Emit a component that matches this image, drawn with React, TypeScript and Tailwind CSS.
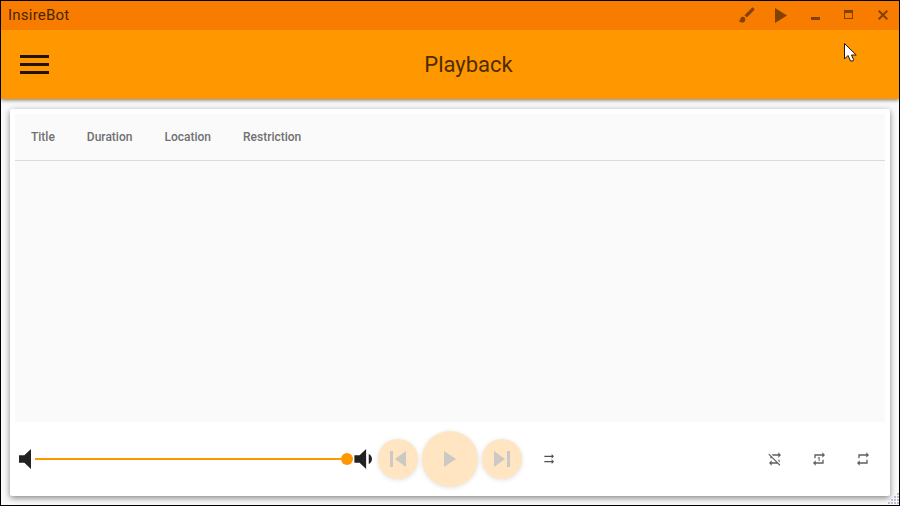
import React from "react";

function Glyph({ d, className, viewBox = "0 0 24 24" }: { d: string; className: string; viewBox?: string }) {
  return (
    <svg viewBox={viewBox} preserveAspectRatio="none" fill="currentColor" className={`block shrink-0 ${className}`}>
      <path d={d} />
    </svg>
  );
}

const BRUSH =
  "M20.71,4.63L19.37,3.29C19,2.9 18.35,2.9 17.96,3.29L9,12.25L11.75,15L20.71,6.04C21.1,5.65 21.1,5 20.71,4.63M7,14A3,3 0 0,0 4,17C4,18.31 2.84,19 2,19C2.92,20.22 4.5,21 6,21A4,4 0 0,0 10,17A3,3 0 0,0 7,14Z";
const REPEAT = "M17,17H7V14L3,18L7,22V19H19V13H17M7,7H17V10L21,6L17,2V5H5V11H7V7Z";
const REPEAT_ONCE = "M13,15V9H12L10,10V11H11.5V15M17,17H7V14L3,18L7,22V19H19V13H17M7,7H17V10L21,6L17,2V5H5V11H7V7Z";
const REPEAT_OFF =
  "M2,5.27L3.28,4L20,20.72L18.73,22L15.73,19H7V22L3,18L7,14V17H13.73L7,10.27V11H5V8.27L2,5.27M17,13H19V17.18L17,15.18V13M17,5V2L21,6L17,10V7H8.82L6.82,5H17Z";
const SHUFFLE_OFF = "M16,4.5V7H5V9H16V11.5L19.5,8M16,12.5V15H5V17H16V19.5L19.5,16";

function TitleBar() {
  return (
    <header className="z-20 flex h-[29px] items-center bg-[#f77c00] pr-[11px] pb-px pl-[7px] text-[#824100]">
      <h1 className="flex-1 text-[15px] leading-7 tracking-[0.22px] text-[#4a2500]">InsireBot</h1>
      <button className="mr-[18px]"><Glyph d={BRUSH} className="h-5 w-5" /></button>
      <button className="mr-[24px]"><Glyph d="M0 0L12.4 7.5L0 15Z" viewBox="0 0 12.4 15" className="h-[15px] w-[12px]" /></button>
      <button className="mt-[7px] mr-[24px] h-[3px] w-[9px] bg-[#7f4000]" aria-label="Minimize" />
      <button className="mr-[25px] mb-px h-[9px] w-[9px] border border-t-[3px] border-[#7f4000]" aria-label="Maximize" />
      <svg className="block h-[10px] w-[10px]" viewBox="0 0 10 10" fill="none" stroke="currentColor" strokeWidth="2">
        <path d="M.7 .7L9.3 9.3M9.3 .7L.7 9.3" />
      </svg>
    </header>
  );
}

function AppBar() {
  return (
    <div className="z-10 flex h-[69px] items-center bg-[#ff9800] shadow-[0_1px_4px_rgba(0,0,0,0.55)]">
      <button className="ml-[19px] flex w-[29px] flex-col gap-[5px] text-[#211300]" aria-label="Menu">
        <span className="h-[3px] w-full bg-current" />
        <span className="h-[3px] w-full bg-current" />
        <span className="h-[3px] w-full bg-current" />
      </button>
      <h2 className="flex-1 pr-[11px] text-center text-[22px] text-[#4c2d00]">Playback</h2>
    </div>
  );
}

function Controls() {
  return (
    <div className="flex h-[74px] items-center pl-[9px]">
      <Glyph d="M7,9V15H11L16,20V4L11,9H7Z" viewBox="7 4 9 16" className="h-5 w-3 text-[#222]" />
      <div className="ml-1 flex w-[318px] items-center">
        <div className="h-[2px] flex-1 bg-[#ff9800]" />
        <div className="h-3 w-3 rounded-full bg-[#ff9800]" />
      </div>
      <Glyph
        d="M5,9V15H9L14,20V4L9,9M18.5,12C18.5,10.23 17.5,8.71 16,7.97V16C17.5,15.29 18.5,13.76 18.5,12Z"
        viewBox="4.7 4 13.8 16"
        className="ml-[1px] h-5 w-[18px] text-[#222]"
      />
      <div className="ml-[6px] flex items-center gap-1 text-[#ccc8c3]">
        <button className="flex h-10 w-10 items-center justify-center rounded-full bg-[#ffe5c2] shadow-[0_1px_5px_rgba(0,0,0,0.12)]">
          <Glyph d="M0 0H3V16H0ZM16 0V16L5 8Z" viewBox="0 0 16 16" className="h-4 w-4" />
        </button>
        <button className="flex h-14 w-14 items-center justify-center rounded-full bg-[#ffe5c2] shadow-[0_1px_5px_rgba(0,0,0,0.12)]">
          <Glyph d="M0 0L12 8L0 16Z" viewBox="0 0 12 16" className="h-4 w-[12px]" />
        </button>
        <button className="flex h-10 w-10 items-center justify-center rounded-full bg-[#ffe5c2] shadow-[0_1px_5px_rgba(0,0,0,0.12)]">
          <Glyph d="M0 0L11 8L0 16ZM13 0H16V16H13Z" viewBox="0 0 16 16" className="h-4 w-4" />
        </button>
      </div>
      <button className="ml-[19px] text-[#505050]"><Glyph d={SHUFFLE_OFF} className="h-4 w-4" /></button>
      <div className="mr-[19px] ml-auto flex gap-7 text-[#606060]">
        <Glyph d={REPEAT_OFF} className="h-4 w-4" />
        <Glyph d={REPEAT_ONCE} className="h-4 w-4" />
        <Glyph d={REPEAT} className="h-4 w-4" />
      </div>
    </div>
  );
}

function Pointer() {
  return (
    <svg className="absolute top-[41px] left-[843px] z-30 h-[20px] w-[13px]" viewBox="0 0 13 20">
      <path d="M.5 1.5V17L4 13.5L6.5 19H9L9.5 17.5L7.5 13H12.2Z" fill="#fff" stroke="#201510" />
    </svg>
  );
}

function ResizeGrip() {
  return (
    <svg className="absolute right-0 bottom-px h-[11px] w-[11px]" viewBox="0 0 11 11" fill="#b9bfd2">
      <path d="M9 0h2v2h-2zM6 3h2v2h-2zM9 3h2v2h-2zM3 6h2v2h-2zM6 6h2v2h-2zM9 6h2v2h-2zM0 9h2v2h-2zM3 9h2v2h-2zM6 9h2v2h-2zM9 9h2v2h-2z" />
    </svg>
  );
}

export default function App() {
  return (
    <div className="relative flex h-[506px] w-[900px] flex-col overflow-hidden border border-black bg-[#fafafa] font-['Roboto','Liberation_Sans',sans-serif]">
      <TitleBar />
      <AppBar />
      <main className="mx-[9px] mt-[10px] flex h-[387px] flex-col rounded-[2px] bg-white shadow-[0_2px_6px_rgba(0,0,0,0.48)]">
        <section className="mx-[5px] mt-[5px] h-[308px] bg-[#fafafa]">
          <div className="flex h-[47px] items-center gap-8 border-b border-[#dadada] pl-4 text-[12px] font-medium text-[#707070]">
            <span>Title</span>
            <span>Duration</span>
            <span>Location</span>
            <span>Restriction</span>
          </div>
        </section>
        <Controls />
      </main>
      <ResizeGrip />
      <Pointer />
    </div>
  );
}
